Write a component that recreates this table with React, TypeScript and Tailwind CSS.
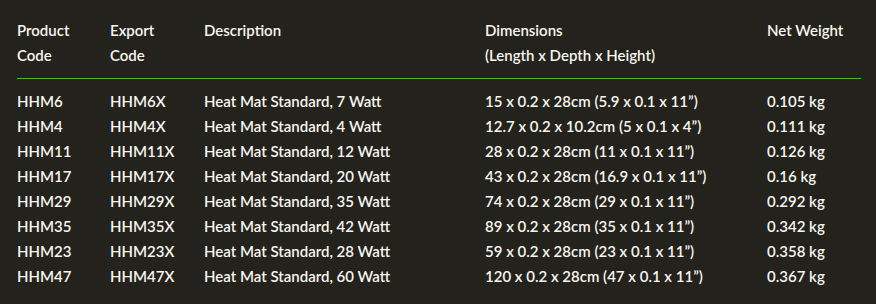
import React from 'react';

const rows = [
  ['HHM6', 'HHM6X', 'Heat Mat Standard, 7 Watt', '15 x 0.2 x 28cm (5.9 x 0.1 x 11”)', '0.105 kg'],
  ['HHM4', 'HHM4X', 'Heat Mat Standard, 4 Watt', '12.7 x 0.2 x 10.2cm (5 x 0.1 x 4”)', '0.111 kg'],
  ['HHM11', 'HHM11X', 'Heat Mat Standard, 12 Watt', '28 x 0.2 x 28cm (11 x 0.1 x 11”)', '0.126 kg'],
  ['HHM17', 'HHM17X', 'Heat Mat Standard, 20 Watt', '43 x 0.2 x 28cm (16.9 x 0.1 x 11”)', '0.16 kg'],
  ['HHM29', 'HHM29X', 'Heat Mat Standard, 35 Watt', '74 x 0.2 x 28cm (29 x 0.1 x 11”)', '0.292 kg'],
  ['HHM35', 'HHM35X', 'Heat Mat Standard, 42 Watt', '89 x 0.2 x 28cm (35 x 0.1 x 11”)', '0.342 kg'],
  ['HHM23', 'HHM23X', 'Heat Mat Standard, 28 Watt', '59 x 0.2 x 28cm (23 x 0.1 x 11”)', '0.358 kg'],
  ['HHM47', 'HHM47X', 'Heat Mat Standard, 60 Watt', '120 x 0.2 x 28cm (47 x 0.1 x 11”)', '0.367 kg'],
];

const cols = 'grid grid-cols-[93px_94px_281px_282px_94px]';

export default function App() {
  return (
    <div className="w-[876px] h-[304px] bg-[#23221c] text-[#f7f5ee] pt-[18px] pl-[17px] pr-[15px] font-['Lato',sans-serif] text-[15px] leading-[25px] font-semibold">
      <div className={`${cols} pb-[10px] border-b border-[#5cb21e]`}>
        <div>Product<br />Code</div>
        <div>Export<br />Code</div>
        <div>Description</div>
        <div>Dimensions<br />(Length x Depth x Height)</div>
        <div>Net Weight</div>
      </div>
      <div className="pt-[10px]">
        {rows.map((r) => (
          <div key={r[0]} className={cols}>
            {r.map((c, i) => (
              <div key={i} className="whitespace-nowrap">{c}</div>
            ))}
          </div>
        ))}
      </div>
    </div>
  );
}
